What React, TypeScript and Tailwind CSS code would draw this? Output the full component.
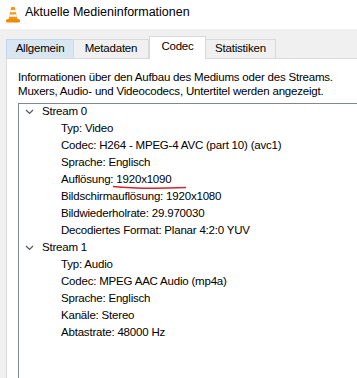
import React from "react";

const font = { fontFamily: '"Liberation Sans", Arial, sans-serif' };

function VlcIcon() {
  return (
    <svg width="16" height="17" viewBox="0 0 16 17">
      <path d="M1 14.5 Q1 13 3 13 L13 13 Q15 13 15 14.5 L15 15.5 Q15 16.5 13.5 16.5 L2.5 16.5 Q1 16.5 1 15.5 Z" fill="#f08a00" />
      <path d="M6.3 1 L9.7 1 L12.6 13.5 L3.4 13.5 Z" fill="#f7941d" />
      <path d="M5.6 4 L10.4 4 L10.9 6.2 L5.1 6.2 Z" fill="#fff" />
      <path d="M4.6 8.6 L11.4 8.6 L11.9 10.8 L4.1 10.8 Z" fill="#fff" />
    </svg>
  );
}

function Chevron() {
  return (
    <svg width="9" height="6" viewBox="0 0 9 6" className="shrink-0">
      <path d="M1 1 L4.5 4.5 L8 1" fill="none" stroke="#555" strokeWidth="1.2" />
    </svg>
  );
}

const tabs = [
  { label: "Allgemein", w: "w-[68px]", cls: "bg-[#d8e6f2] border-[#c2d6ea]" },
  { label: "Metadaten", w: "w-[76px]", cls: "bg-[#f0f0f0] border-[#d9d9d9]" },
  { label: "Codec", w: "w-[57px]", cls: "active" },
  { label: "Statistiken", w: "w-[71px]", cls: "bg-[#f0f0f0] border-[#d9d9d9]" },
];

const streams = [
  {
    name: "Stream 0",
    rows: [
      ["Typ: Video"],
      ["Codec: H264 - MPEG-4 AVC (part 10) (avc1)"],
      ["Sprache: Englisch"],
      ["Auflösung: ", "1920x1090"],
      ["Bildschirmauflösung: 1920x1080"],
      ["Bildwiederholrate: 29.970030"],
      ["Decodiertes Format: Planar 4:2:0 YUV"],
    ],
  },
  {
    name: "Stream 1",
    rows: [
      ["Typ: Audio"],
      ["Codec: MPEG AAC Audio (mp4a)"],
      ["Sprache: Englisch"],
      ["Kanäle: Stereo"],
      ["Abtastrate: 48000 Hz"],
    ],
  },
];

export default function App() {
  return (
    <div
      className="w-[357px] h-[378px] bg-[#f0f0f0] overflow-hidden flex flex-col text-[11.5px] tracking-[-0.2px] text-black"
      style={font}
    >
      {/* title bar */}
      <div className="h-[29px] bg-white flex items-center pl-[5px] gap-[4px] shrink-0">
        <VlcIcon />
        <span className="text-[12.5px] tracking-normal mb-[4px]">Aktuelle Medieninformationen</span>
      </div>

      {/* tabs */}
      <div className="flex items-end pl-[6px] h-[29px] shrink-0 relative z-10">
        {tabs.map((t) =>
          t.cls === "active" ? (
            <div
              key={t.label}
              className={`${t.w} h-[23px] -mb-px bg-white border border-b-0 border-[#d9d9d9] flex items-center justify-center pb-[2px]`}
            >
              {t.label}
            </div>
          ) : (
            <div
              key={t.label}
              className={`${t.w} h-[19px] border border-b-0 -ml-px first:ml-0 ${t.cls} flex items-center justify-center`}
            >
              {t.label}
            </div>
          )
        )}
      </div>

      {/* panel */}
      <div className="flex-1 ml-[6px] bg-white border-l border-t border-[#d9d9d9] pl-[11px] pt-[11px] flex flex-col">
        <p className="leading-[14px] whitespace-nowrap">
          Informationen über den Aufbau des Mediums oder des Streams.
          <br />
          Muxers, Audio- und Videocodecs, Untertitel werden angezeigt.
        </p>
        <div className="mt-[5px] flex-1 border-l border-t border-[#828790]">
          {streams.map((s) => (
            <div key={s.name}>
              <div className="h-[17px] flex items-center pl-[6px] gap-[8px] pb-[2px]">
                <Chevron />
                <span>{s.name}</span>
              </div>
              {s.rows.map((r) => (
                <div key={r.join("")} className="h-[17px] flex items-center pl-[42px] whitespace-nowrap pb-[1px]">
                  <span className="whitespace-pre">
                    {r[0]}
                    {r[1] && (
                      <span className="relative">
                        {r[1]}
                        <svg className="absolute -left-[4px] top-[12px]" width="76" height="7" viewBox="0 0 76 7">
                          <path d="M1 1.5 Q30 4.5 74 2.5" fill="none" stroke="#d8232a" strokeWidth="1.5" />
                        </svg>
                      </span>
                    )}
                  </span>
                </div>
              ))}
            </div>
          ))}
        </div>
      </div>
    </div>
  );
}
